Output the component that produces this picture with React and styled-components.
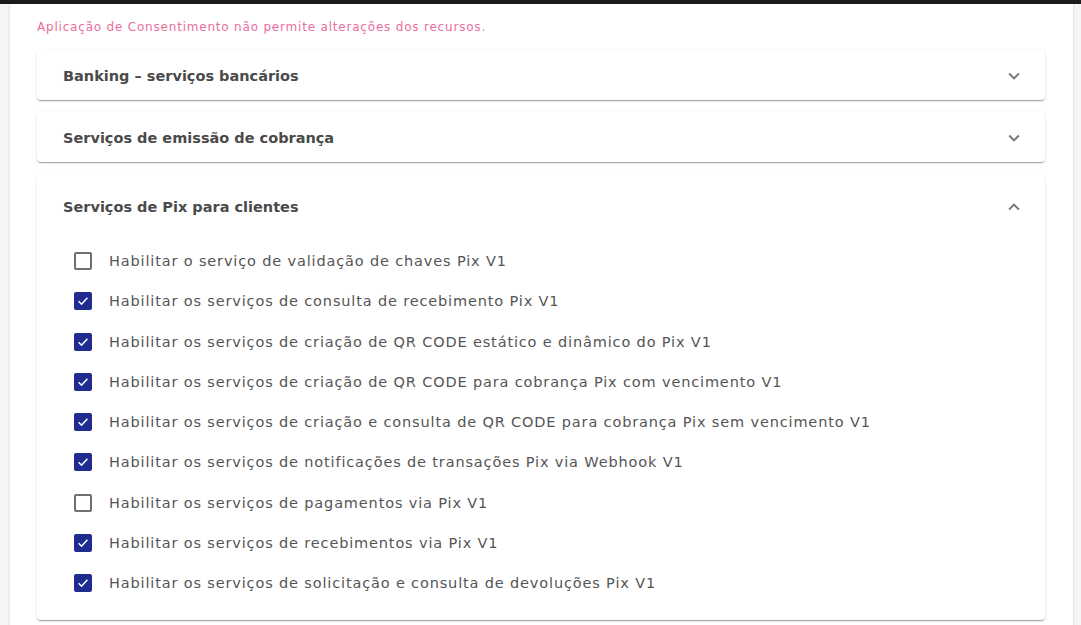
import React from "react";
import styled, { createGlobalStyle } from "styled-components";

const GlobalStyle = createGlobalStyle`
  html, body {
    margin: 0;
    padding: 0;
    background: #f7f7f7;
    font-family: "DejaVu Sans", "Noto Sans", sans-serif;
  }
`;

export const Screen = styled.div`
  width: 1081px;
  height: 625px;
  overflow: hidden;
  display: flex;
  flex-direction: column;
`;

export const TopBar = styled.div`
  height: 4px;
  background: #1c1c1c;
  flex-shrink: 0;
`;

export const Body = styled.div`
  flex: 1;
  display: flex;
  background: #f6f6f6;
`;

export const Panel = styled.div`
  margin-left: 10px;
  width: 1063px;
  background: #fff;
  box-shadow: -1px 0 2px rgba(0, 0, 0, 0.08), 1px 0 2px rgba(0, 0, 0, 0.08);
  padding: 0 28px 0 27px;
  box-sizing: border-box;
  display: flex;
  flex-direction: column;
`;

export const Notice = styled.p`
  margin: 0;
  height: 46px;
  display: flex;
  align-items: center;
  font-size: 12px;
  color: #ea6ea0;
  letter-spacing: 0.8px;
`;

export const Card = styled.div`
  background: #fff;
  border-radius: 4px;
  box-shadow: 0 2px 1px -1px rgba(0, 0, 0, 0.2), 0 1px 1px 0 rgba(0, 0, 0, 0.14),
    0 1px 3px 0 rgba(0, 0, 0, 0.12);
  margin-bottom: ${(p) => p.$gap || 12}px;
`;

export const Summary = styled.div`
  height: ${(p) => (p.$open ? 62 : 50)}px;
  box-sizing: border-box;
  display: flex;
  align-items: center;
  justify-content: space-between;
  padding: 1px 20px 0 26px;
`;

export const Title = styled.span`
  font-size: 14.5px;
  font-weight: 600;
  color: #4a4a4a;
`;

export const Chevron = styled.svg`
  width: 22px;
  height: 22px;
  fill: #777;
`;

export const Details = styled.div`
  padding: 4px 16px 17px 37px;
  display: flex;
  flex-direction: column;
`;

export const Row = styled.label`
  height: 40.25px;
  display: flex;
  align-items: center;
  gap: 17px;
`;

export const Box = styled.span`
  width: 18px;
  height: 18px;
  box-sizing: border-box;
  border-radius: 2px;
  border: ${(p) => (p.$checked ? "none" : "2px solid #6f6f6f")};
  background: ${(p) => (p.$checked ? "#1f2b8f" : "#fff")};
  display: flex;
  align-items: center;
  justify-content: center;
  flex-shrink: 0;
`;

export const Label = styled.span`
  font-size: 14.5px;
  color: #555;
  letter-spacing: 0.85px;
`;

const ExpandMore = () => (
  <Chevron viewBox="0 0 24 24">
    <path d="M16.59 8.59 12 13.17 7.41 8.59 6 10l6 6 6-6z" />
  </Chevron>
);

const ExpandLess = () => (
  <Chevron viewBox="0 0 24 24">
    <path d="m12 8-6 6 1.41 1.41L12 10.83l4.59 4.58L18 14z" />
  </Chevron>
);

const Check = () => (
  <svg width="14" height="14" viewBox="0 0 24 24">
    <path d="M4.5 12.5l5 5 10-11" fill="none" stroke="#fff" strokeWidth="2.6" />
  </svg>
);

const services = [
  ["Habilitar o serviço de validação de chaves Pix V1", false],
  ["Habilitar os serviços de consulta de recebimento Pix V1", true],
  ["Habilitar os serviços de criação de QR CODE estático e dinâmico do Pix V1", true],
  ["Habilitar os serviços de criação de QR CODE para cobrança Pix com vencimento V1", true],
  ["Habilitar os serviços de criação e consulta de QR CODE para cobrança Pix sem vencimento V1", true],
  ["Habilitar os serviços de notificações de transações Pix via Webhook V1", true],
  ["Habilitar os serviços de pagamentos via Pix V1", false],
  ["Habilitar os serviços de recebimentos via Pix V1", true],
  ["Habilitar os serviços de solicitação e consulta de devoluções Pix V1", true],
];

export default function App() {
  return (
    <Screen>
      <GlobalStyle />
      <TopBar />
      <Body>
        <Panel>
          <Notice>Aplicação de Consentimento não permite alterações dos recursos.</Notice>
          <Card>
            <Summary>
              <Title>Banking – serviços bancários</Title>
              <ExpandMore />
            </Summary>
          </Card>
          <Card $gap={13}>
            <Summary>
              <Title>Serviços de emissão de cobrança</Title>
              <ExpandMore />
            </Summary>
          </Card>
          <Card>
            <Summary $open>
              <Title>Serviços de Pix para clientes</Title>
              <ExpandLess />
            </Summary>
            <Details>
              {services.map(([text, checked]) => (
                <Row key={text}>
                  <Box $checked={checked}>{checked && <Check />}</Box>
                  <Label>{text}</Label>
                </Row>
              ))}
            </Details>
          </Card>
        </Panel>
      </Body>
    </Screen>
  );
}
